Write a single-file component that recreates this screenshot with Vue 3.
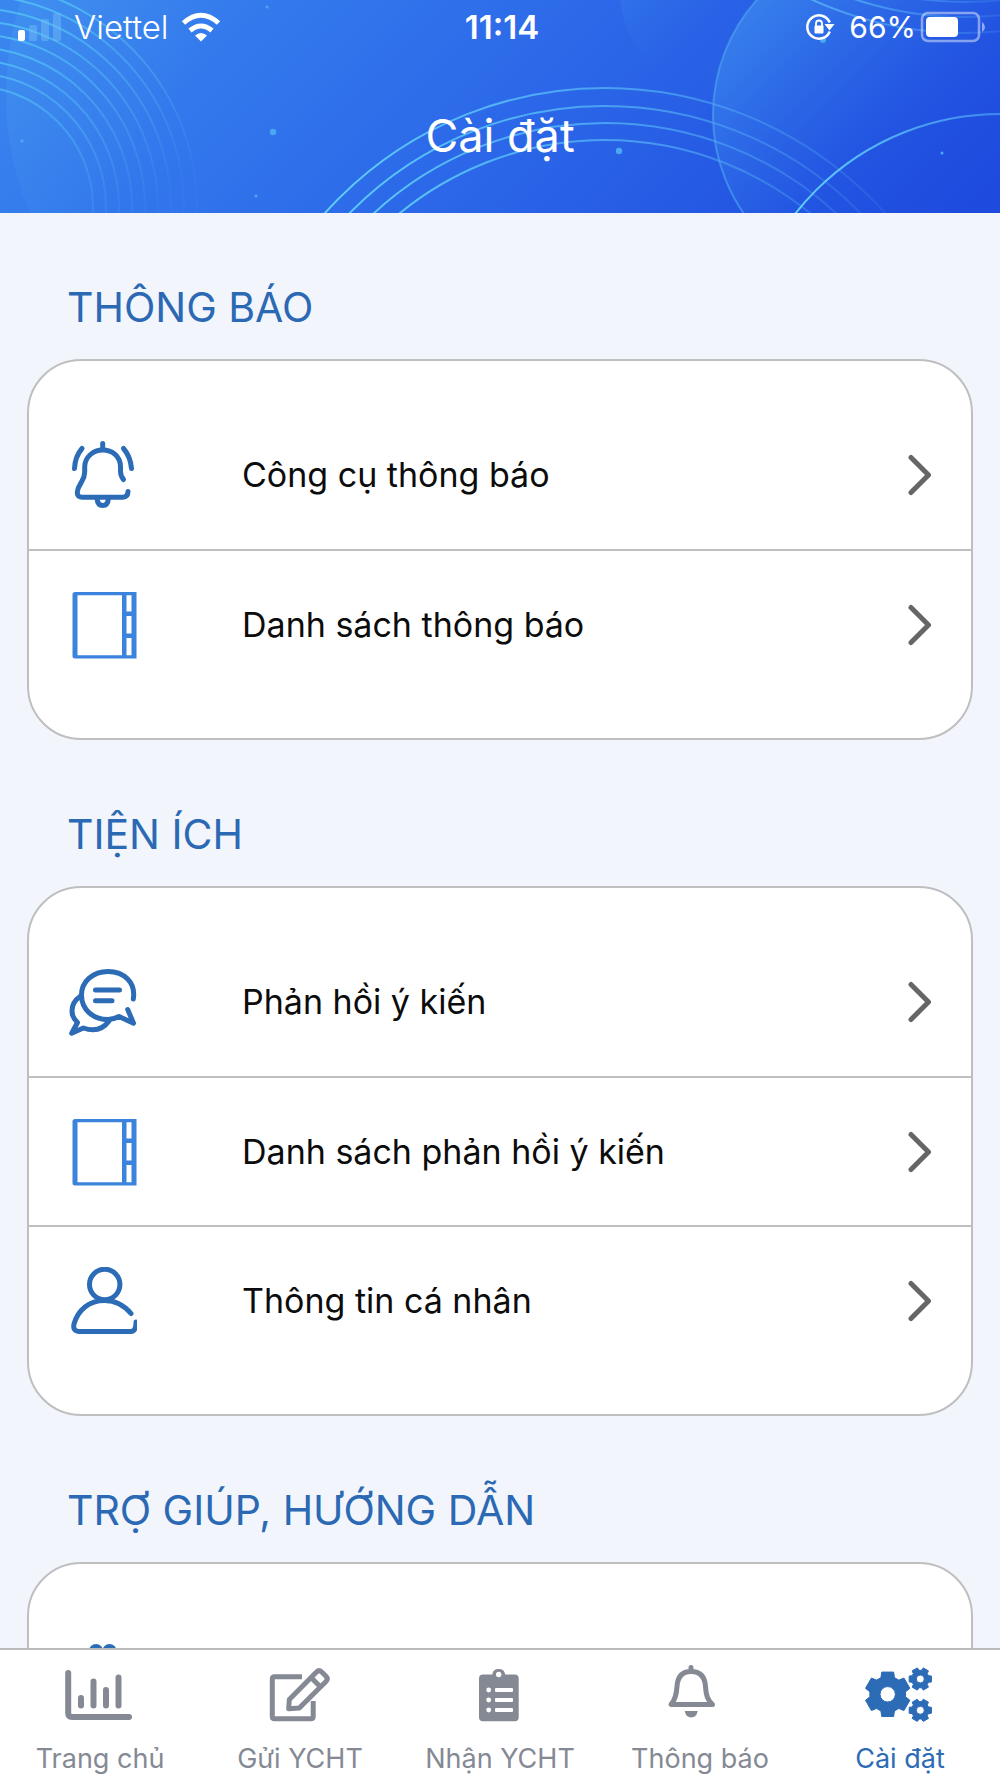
<script setup>
import { ref } from 'vue'

const sections = [
  {
    title: 'THÔNG BÁO',
    items: [
      { icon: 'bell', label: 'Công cụ thông báo' },
      { icon: 'book', label: 'Danh sách thông báo' },
    ],
  },
  {
    title: 'TIỆN ÍCH',
    items: [
      { icon: 'chat', label: 'Phản hồi ý kiến' },
      { icon: 'book', label: 'Danh sách phản hồi ý kiến' },
      { icon: 'user', label: 'Thông tin cá nhân' },
    ],
  },
  {
    title: 'TRỢ GIÚP, HƯỚNG DẪN',
    items: [{ icon: 'gift', label: '' }],
  },
]

const tabs = [
  { icon: 'chart', label: 'Trang chủ' },
  { icon: 'edit', label: 'Gửi YCHT' },
  { icon: 'clipboard', label: 'Nhận YCHT' },
  { icon: 'bell', label: 'Thông báo' },
  { icon: 'gears', label: 'Cài đặt' },
]
const active = ref('gears')

const leftRings = [121, 134, 147, 160, 173, 186, 199, 212, 225]
const middleRings = [376, 358, 341, 324]
const topRings = [337, 352, 368]
const dots = [
  [267, 7, 1.5], [273, 132, 3.2], [22, 141, 1.7], [256, 196, 1.6],
  [619, 151, 3.2], [823, 40, 3], [942, 153, 1.5],
]

// Six-toothed gear outline with a round hole, drawn with the even-odd rule.
function gear(cx, cy, outer, inner, hole, start) {
  const pts = []
  for (let i = 0; i < 6; i++) {
    const a = start + i * 60
    for (const [r, d] of [[inner, -22], [outer, -15], [outer, 15], [inner, 22]]) {
      const t = ((a + d) * Math.PI) / 180
      pts.push(`${(cx + r * Math.cos(t)).toFixed(2)} ${(cy + r * Math.sin(t)).toFixed(2)}`)
    }
  }
  return `M${pts.join('L')}ZM${cx - hole} ${cy}a${hole} ${hole} 0 1 0 ${2 * hole} 0a${hole} ${hole} 0 1 0 ${-2 * hole} 0Z`
}
const gears = [
  gear(22.7, 30.3, 23, 18, 7.7, 30),
  gear(55.3, 15, 11.5, 8.8, 4, 0),
  gear(55.3, 46.3, 11.5, 8.8, 4, 0),
]
</script>

<template>
  <div class="screen">
    <header class="header">
      <svg class="backdrop" viewBox="0 0 1000 213" preserveAspectRatio="none" aria-hidden="true">
        <defs>
          <linearGradient id="sky" gradientUnits="userSpaceOnUse" x1="180" y1="-160" x2="760" y2="420">
            <stop offset="0" stop-color="#3a86ef" />
            <stop offset="0.5" stop-color="#2c69e9" />
            <stop offset="1" stop-color="#1e4bde" />
          </linearGradient>
          <linearGradient id="haze" x1="0" y1="0.3" x2="0.6" y2="0.6">
            <stop offset="0" stop-color="#56b4f0" stop-opacity="0.22" />
            <stop offset="0.5" stop-color="#56b4f0" stop-opacity="0" />
          </linearGradient>
          <linearGradient id="orb" x1="0.05" y1="0.2" x2="0.6" y2="0.75">
            <stop offset="0" stop-color="#48a0f2" stop-opacity="0.5" />
            <stop offset="0.75" stop-color="#3c86ee" stop-opacity="0" />
          </linearGradient>
          <linearGradient id="ringLeft" gradientUnits="userSpaceOnUse" x1="0" y1="60" x2="150" y2="210">
            <stop offset="0" stop-color="#55c6f6" stop-opacity="0.75" />
            <stop offset="1" stop-color="#55b0f6" stop-opacity="0.06" />
          </linearGradient>
          <linearGradient id="ringMid" gradientUnits="userSpaceOnUse" x1="330" y1="0" x2="900" y2="0">
            <stop offset="0" stop-color="#5fd0fa" />
            <stop offset="0.55" stop-color="#4fa9f4" stop-opacity="0.8" />
            <stop offset="1" stop-color="#4fa0f4" stop-opacity="0.1" />
          </linearGradient>
          <linearGradient id="ringEnd" gradientUnits="userSpaceOnUse" x1="800" y1="0" x2="1000" y2="0">
            <stop offset="0" stop-color="#5fd0fa" />
            <stop offset="1" stop-color="#4796f2" stop-opacity="0.8" />
          </linearGradient>
          <linearGradient id="ringTop" gradientUnits="userSpaceOnUse" x1="815" y1="0" x2="1000" y2="0">
            <stop offset="0" stop-color="#5cc0fa" stop-opacity="0.7" />
            <stop offset="1" stop-color="#5cc0fa" stop-opacity="0.15" />
          </linearGradient>
        </defs>
        <rect width="1000" height="213" fill="url(#sky)" />
        <circle cx="310" cy="95" r="304" fill="url(#haze)" />
        <circle cx="719" cy="-8" r="99" fill="url(#orb)" opacity="0.6" />
        <circle cx="886" cy="115" r="173" fill="url(#orb)" />
        <g fill="none" stroke-width="2">
          <circle v-for="r in leftRings" :key="r" cx="-28" cy="207" :r="r" stroke="url(#ringLeft)" />
          <circle v-for="r in middleRings" :key="r" cx="605" cy="464" :r="r" stroke="url(#ringMid)" />
          <circle v-for="r in topRings" :key="r" cx="965" cy="-335" :r="r" stroke="url(#ringTop)" />
          <circle cx="886" cy="115" r="173" stroke="#4fa9f4" stroke-opacity="0.6" />
          <circle cx="1000" cy="374" r="260" stroke="url(#ringEnd)" />
        </g>
        <circle v-for="(d, i) in dots" :key="i" :cx="d[0]" :cy="d[1]" :r="d[2]" fill="#4aa7f3" />
      </svg>

      <div class="status">
        <div class="status-left">
          <svg width="44" height="28" viewBox="0 0 44 28" fill="#fff" aria-hidden="true">
            <rect x="0" y="17" width="7" height="11" rx="2" />
            <g fill="#7cc0f7" fill-opacity="0.42">
              <rect x="11" y="12" width="8" height="16" rx="2" />
              <rect x="23" y="6" width="8" height="22" rx="2" />
              <rect x="35" y="0" width="8" height="28" rx="2" />
            </g>
          </svg>
          <span class="carrier">Viettel</span>
          <svg class="wifi" width="40" height="30" viewBox="0 0 40 30" aria-hidden="true">
            <g fill="none" stroke="#fff" stroke-width="5">
              <path d="M2.500 11Q20-4.500 37.500 11" />
              <path d="M9 18.500Q20 9.500 31 18.500" />
            </g>
            <path d="M14 23.500Q20 18.500 26 23.500L20 29.500Z" fill="#fff" />
          </svg>
        </div>
        <span class="time">11:14</span>
        <div class="status-right">
          <svg class="lock" width="30" height="28" viewBox="0 0 30 28" aria-hidden="true">
            <path d="M24.800 18.500A11.700 11.700 0 1 1 24.800 9.500" fill="none" stroke="#fff" stroke-width="2.500" />
            <path d="M19.500 11H29.500L24.500 17.500Z" fill="#fff" />
            <rect x="9.500" y="12.500" width="9" height="8" rx="1" fill="#fff" />
            <path d="M11 13.500V10.500Q11 7.500 14 7.500T17 10.500V13.500" fill="none" stroke="#fff" stroke-width="1.800" />
          </svg>
          <span class="percent">66%</span>
          <svg width="66" height="32" viewBox="0 0 66 32" aria-hidden="true">
            <rect x="2" y="2" width="57" height="28" rx="6" fill="none" stroke="#fff" stroke-opacity="0.45" stroke-width="2.500" />
            <rect x="6" y="6" width="32" height="20" rx="4" fill="#fff" />
            <path d="M62 11Q65 13 65 16T62 21Z" fill="#fff" fill-opacity="0.5" />
          </svg>
        </div>
      </div>
      <h1 class="title">Cài đặt</h1>
    </header>

    <main class="content">
      <section v-for="s in sections" :key="s.title">
        <h2 class="section-title">{{ s.title }}</h2>
        <div class="card">
          <button v-for="item in s.items" :key="item.label" type="button" class="row">
            <svg class="row-icon" viewBox="0 0 68 68" aria-hidden="true">
              <g v-if="item.icon === 'bell'" class="line">
                <path d="M33.700 2.500V8" />
                <path d="M54.500 38.500Q51.500 35 51.500 30V26C51.500 15 43 9 33.700 9S15.700 16 15.700 26V31Q15.700 36 12.500 41L9.500 46.500Q6 56 13 56.200H54Q59 56 59 50.500" />
                <path d="M28 57Q28.500 64.500 33.700 64.500T39.500 57" />
                <path d="M13 7.500Q6 15.500 5.500 27.500M54.500 7.500Q61.500 15.500 62.500 27.500" />
              </g>
              <g v-else-if="item.icon === 'book'" class="book">
                <path fill-rule="evenodd" d="M6 1H67.500V67.500H6Q3.500 67.500 3.500 65V3.500Q3.500 1 6 1ZM8.500 4.200V64.200H53V4.200ZM57.500 4.200V20.500H62.500V4.200ZM57.500 25V42.500H62.500V25ZM57.500 47V64.200H62.500V47Z" />
              </g>
              <g v-else-if="item.icon === 'chat'" class="line">
                <path d="M64.300 31C67 14.500 55 3.500 39 3.500C24 3.500 12.500 13.500 12.500 27C12.500 42 24.500 51.500 39 51.500Q44.500 51.500 50 48.500L64.500 55.200L58.700 41.500" />
                <path d="M26.500 22H50.500M26.500 32.700H43" />
                <path d="M11 28.500Q3 34 3 43Q3 49.500 8.500 54.500L2.700 65.300L14.300 60Q31 65.500 40 53" />
              </g>
              <g v-else-if="item.icon === 'user'" class="line">
                <circle cx="35.700" cy="17.500" r="15.200" />
                <path d="M62 46.500Q51 33.500 35.700 33.500C20 33.500 9 43 5 57Q3.500 64.200 10 64.500H62Q67 64.500 67 55" />
              </g>
              <g v-else class="line">
                <circle cx="27" cy="7" r="4.500" />
                <circle cx="40.500" cy="7" r="4.500" />
                <path d="M6 14H62V28H6ZM11 28V64H57V28M34 14V64" />
              </g>
            </svg>
            <span class="row-label">{{ item.label }}</span>
            <svg class="chevron" viewBox="0 0 24 42" aria-hidden="true">
              <path d="M3 3.500L20.500 21L3 38.500" />
            </svg>
          </button>
        </div>
      </section>
    </main>

    <nav class="tabs">
      <a
        v-for="t in tabs"
        :key="t.icon"
        href="#"
        class="tab"
        :class="{ active: active === t.icon }"
        @click.prevent="active = t.icon"
      >
        <svg class="tab-icon" viewBox="0 0 70 60" aria-hidden="true">
          <g v-if="t.icon === 'chart'" class="stroke chart">
            <path d="M3.200 9V49Q3.200 53 7 53H64" />
            <path d="M16 34V41.500M28.500 17.500V41.500M41 26V41.500M53.500 13.500V41.500" />
          </g>
          <g v-else-if="t.icon === 'edit'" class="stroke edit">
            <path stroke-linecap="butt" d="M37 12.700H9.500Q7.300 12.700 7.300 15V52.500Q7.300 54.700 9.500 54.700H46Q48.200 54.700 48.200 52.500V37" />
            <path d="M23.700 44.800L24.300 35.500L51.500 8Q54 5.500 56.700 8L61 12.300Q63.500 15 61 17.500L34.300 44Z" />
            <path d="M46.500 14L55 22.500" />
          </g>
          <g v-else-if="t.icon === 'clipboard'">
            <path fill-rule="evenodd" fill="currentColor" d="M18 10.500H27.200A6.600 6.600 0 0 1 40.200 10.500H49.700Q53.700 10.500 53.700 14.500V53.300Q53.700 57.300 49.700 57.300H18Q14 57.300 14 53.300V14.500Q14 10.500 18 10.500ZM31 10.500a2.700 2.700 0 1 0 5.400 0a2.700 2.700 0 1 0-5.400 0Z" />
            <g v-for="y in [26, 36, 46]" :key="y" fill="#fff">
              <circle cx="23.700" :cy="y" r="2.400" />
              <rect x="30" :y="y - 2" width="18" height="4" rx="1" />
            </g>
          </g>
          <g v-else-if="t.icon === 'bell'" class="stroke">
            <path d="M26 3.500V7M26 7.500C16 7.500 12.500 14.500 12 22.500C11.500 31.500 10 36 6 40.500H47.500C42.500 36 41 31.500 40.500 22.500C40 14.500 36.500 7.500 26 7.500Z" />
            <path stroke="none" fill="currentColor" d="M19.700 47H32.700Q31.500 53.500 26.200 53.500T19.700 47Z" />
          </g>
          <g v-else class="gears">
            <path v-for="(g, i) in gears" :key="i" fill-rule="evenodd" :d="g" />
          </g>
        </svg>
        <span>{{ t.label }}</span>
      </a>
    </nav>
  </div>
</template>

<style>
body {
  margin: 0;
}
</style>

<style scoped>
.screen {
  display: flex;
  flex-direction: column;
  height: 100vh;
  background: #f2f5fb;
  font-family: Inter, "Liberation Sans", sans-serif;
  overflow: hidden;
}

.header {
  position: relative;
  flex: none;
  height: 213px;
  color: #fff;
}

.backdrop {
  position: absolute;
  inset: 0;
  width: 100%;
  height: 100%;
}

.status {
  position: relative;
  display: grid;
  grid-template-columns: 1fr auto 1fr;
  align-items: center;
  height: 54px;
  padding: 0 14px 0 18px;
  font-size: 33px;
  line-height: 36px;
}

.status-left,
.status-right {
  display: flex;
  align-items: center;
}

.status-left {
  gap: 12px;
}

.carrier {
  font-weight: 300;
}

.time {
  font-weight: 600;
}

.status-right {
  justify-content: flex-end;
  font-size: 30px;
}

.lock {
  margin-right: 14px;
}

.percent {
  margin-right: 4px;
}

.title {
  position: relative;
  margin: 0;
  padding-top: 54px;
  font-size: 45px;
  line-height: 56px;
  font-weight: 400;
  text-align: center;
}

.content {
  flex: 1;
  min-height: 0;
  padding: 0 27px;
  overflow-y: auto;
  scrollbar-width: none;
}

.section-title {
  margin: 0;
  padding: 68px 40px 26px;
  color: #2b69b4;
  font-size: 41px;
  line-height: 52px;
  font-weight: 400;
}

.card {
  padding: 39px 0 40px;
  background: #fff;
  border: 2px solid #bfbfbf;
  border-radius: 54px;
}

.row {
  display: flex;
  align-items: center;
  width: 100%;
  height: 149px;
  padding: 0 39px 0 40px;
  border: 0;
  background: none;
  color: #0c0c0c;
  font: inherit;
  font-size: 34px;
  line-height: 44px;
  text-align: left;
}

.row + .row {
  border-top: 2px solid #bfbfbf;
}

.row-icon {
  flex: none;
  width: 68px;
  height: 68px;
}

.row-label {
  flex: 1;
  padding-left: 105px;
}

.line {
  fill: none;
  stroke: #2c6bb5;
  stroke-width: 5;
  stroke-linecap: round;
  stroke-linejoin: round;
}

.book {
  fill: #3b83dc;
}

.chevron {
  flex: none;
  width: 24px;
  height: 42px;
  fill: none;
  stroke: #666;
  stroke-width: 5;
  stroke-linecap: round;
  stroke-linejoin: round;
}

.tabs {
  display: flex;
  flex: none;
  height: 128px;
  border-top: 2px solid #bcbcbc;
  background: #fff;
}

.tab {
  display: flex;
  flex: 1;
  flex-direction: column;
  align-items: center;
  gap: 18px;
  padding-top: 14px;
  color: #858994;
  font-size: 27px;
  line-height: 34px;
  text-decoration: none;
}

.active {
  color: #2c6bb5;
}

.tab-icon {
  width: 70px;
  height: 60px;
}

.stroke {
  fill: none;
  stroke: currentColor;
  stroke-width: 5;
  stroke-linecap: round;
  stroke-linejoin: round;
}

.chart {
  stroke-width: 6;
}

.gears {
  fill: currentColor;
  stroke: currentColor;
  stroke-width: 1;
  stroke-linejoin: round;
}
</style>
